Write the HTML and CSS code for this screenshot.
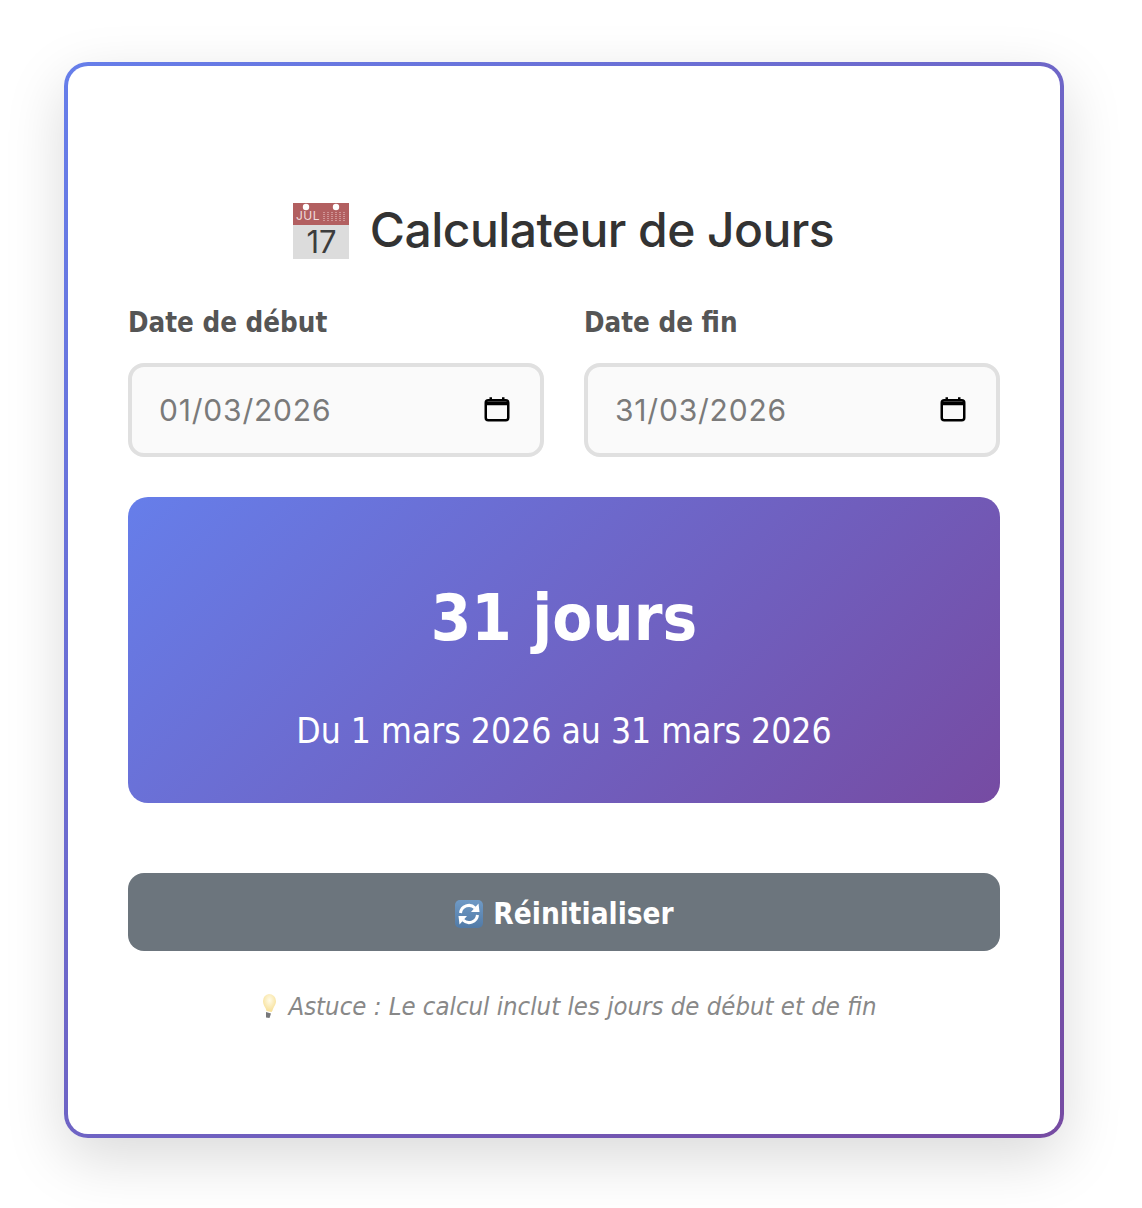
FILE: index.html
```html
<!DOCTYPE html>
<html>
<head>
    <title>Calculateur de Jours</title>
    <link rel="stylesheet" href="styles.css">
</head>
<body>
    <div class="container">
        <h1 class="title">
            <svg class="title-icon" viewBox="0 0 60 58" width="60" height="58">
                <defs>
                    <linearGradient id="tile" x1="0" y1="0" x2="0" y2="1">
                        <stop offset="0" stop-color="#6f9ac6"/>
                        <stop offset="1" stop-color="#517aa6"/>
                    </linearGradient>
                    <radialGradient id="bulb" cx="0.5" cy="0.35" r="0.7">
                        <stop offset="0" stop-color="#fffbe8"/>
                        <stop offset="1" stop-color="#f6dc8c"/>
                    </radialGradient>
                </defs>
                <rect x="1" y="1" width="56" height="56" fill="#dcdcdc"/>
                <rect x="1" y="1" width="56" height="22" fill="#b25f60"/>
                <circle cx="14" cy="5" r="3.200" fill="#fff"/>
                <circle cx="44" cy="5" r="3.200" fill="#fff"/>
                <text x="4" y="17.500" class="icon-month">JUL</text>
                <path d="M32 10v10M36 10v10M40 10v10M44 10v10M48 10v10M52 10v10" stroke="#cf9596" stroke-width="2" stroke-dasharray="1 1"/>
                <text x="29.500" y="51" class="icon-day">17</text>
            </svg>
            <span>Calculateur de Jours</span>
        </h1>

        <div class="dates">
            <div class="field">
                <label class="field-label">Date de début</label>
                <div class="date-input">
                    <span>01/03/2026</span>
                    <svg class="picker" viewBox="0 0 24 24" width="30" height="30">
                        <path d="M5 5h14a2 2 0 0 1 2 2v12a2 2 0 0 1-2 2H5a2 2 0 0 1-2-2V7a2 2 0 0 1 2-2z" fill="none" stroke="#000" stroke-width="2"/>
                        <path d="M3 6h18v3H3zM6 2.500h2v3H6zM16 2.500h2v3h-2z" fill="#000"/>
                    </svg>
                </div>
            </div>
            <div class="field">
                <label class="field-label">Date de fin</label>
                <div class="date-input">
                    <span>31/03/2026</span>
                    <svg class="picker" viewBox="0 0 24 24" width="30" height="30">
                        <path d="M5 5h14a2 2 0 0 1 2 2v12a2 2 0 0 1-2 2H5a2 2 0 0 1-2-2V7a2 2 0 0 1 2-2z" fill="none" stroke="#000" stroke-width="2"/>
                        <path d="M3 6h18v3H3zM6 2.500h2v3H6zM16 2.500h2v3h-2z" fill="#000"/>
                    </svg>
                </div>
            </div>
        </div>

        <div class="result">
            <div class="result-days">31 jours</div>
            <div class="result-range">Du 1 mars 2026 au 31 mars 2026</div>
        </div>

        <button class="reset">
            <svg class="reset-icon" viewBox="0 0 30 30" width="30" height="30">
                <rect x="1" y="1" width="28" height="28" rx="5" fill="url(#tile)"/>
                <path d="M6.500 14a8.500 8.500 0 0 1 14.500-5" fill="none" stroke="#fff" stroke-width="3"/>
                <path d="M23.500 16a8.500 8.500 0 0 1-14.500 5" fill="none" stroke="#fff" stroke-width="3"/>
                <path d="M17 13l8.500 0-1-8.500zM13 17l-8.500 0 1 8.500z" fill="#fff"/>
            </svg>
            <span>Réinitialiser</span>
        </button>

        <p class="tip">
            <svg class="tip-icon" viewBox="0 0 20 26" width="20" height="26">
                <path d="M11 1a7 7 0 0 1 7 7c0 4-2.500 5.500-3.500 9.500l-1 1.500-5-1c-0.500-3.500-3.500-5.500-3.500-10A7 7 0 0 1 11 1z" fill="url(#bulb)"/>
                <path d="M8 19l5 1.500-1.500 4.500-3.500-0.500z" fill="#77787a"/>
            </svg>
            <span>Astuce : Le calcul inclut les jours de début et de fin</span>
        </p>
    </div>
</body>
</html>
```

FILE: styles.css
```css
* {
    box-sizing: border-box;
}

body {
    margin: 0;
    padding: 62px 0 70px 64px;
    background-color: #fff;
    font-family: "DejaVu Sans", sans-serif;
    font-stretch: condensed;
}

.container {
    width: 1000px;
    height: 1076px;
    padding: 132px 60px 0;
    border: 4px solid transparent;
    border-radius: 24px;
    background: linear-gradient(#fff, #fff) padding-box, linear-gradient(135deg, #667eea, #764ba2) border-box;
    box-shadow: 0 20px 60px rgba(0, 0, 0, 0.15);
}

.title {
    display: flex;
    justify-content: center;
    align-items: center;
    gap: 18px;
    height: 62px;
    margin: 0 0 46px;
    padding-right: 2px;
    font-family: "Inter", sans-serif;
    font-size: 48px;
    font-weight: 500;
    font-stretch: normal;
    letter-spacing: -0.55px;
    color: #333;
}

.title-icon {
    margin-top: 4px;
    overflow: visible;
}

.icon-month {
    font-family: "Inter", sans-serif;
    font-size: 12px;
    font-weight: 400;
    letter-spacing: 0.5px;
    fill: #f0dcdc;
}

.icon-day {
    font-family: "Inter", sans-serif;
    font-size: 31px;
    font-weight: 400;
    letter-spacing: 0;
    text-anchor: middle;
    fill: #3c3c3c;
}

.dates {
    display: grid;
    grid-template-columns: 1fr 1fr;
    gap: 40px;
}

.field-label {
    display: block;
    height: 32px;
    margin-bottom: 25px;
    font-size: 27.5px;
    font-weight: 700;
    line-height: 32px;
    color: #555;
}

.date-input {
    display: flex;
    justify-content: space-between;
    align-items: center;
    height: 94px;
    padding: 0 28px 0 27px;
    border: 4px solid #e0e0e0;
    border-radius: 16px;
    background-color: #fafafa;
    font-family: "Inter", sans-serif;
    font-size: 30px;
    font-stretch: normal;
    letter-spacing: 0.8px;
    color: #7a7a7a;
}

.picker {
    margin-bottom: 2px;
}

.result {
    height: 306px;
    margin-top: 40px;
    padding-top: 79px;
    border-radius: 20px;
    background: linear-gradient(135deg, #667eea, #764ba2);
    color: #fff;
    text-align: center;
}

.result-days {
    font-size: 64.8px;
    font-weight: 700;
    line-height: 84px;
}

.result-range {
    margin-top: 48px;
    font-size: 35.2px;
    line-height: 46px;
}

.reset {
    display: flex;
    justify-content: center;
    align-items: center;
    gap: 9px;
    width: 100%;
    height: 78px;
    margin-top: 70px;
    padding-top: 4px;
    border: none;
    border-radius: 16px;
    background-color: #6c757d;
    font-family: inherit;
    font-size: 29.5px;
    font-weight: 700;
    font-stretch: condensed;
    color: #fff;
    cursor: pointer;
}

.tip {
    display: flex;
    justify-content: center;
    align-items: center;
    gap: 10px;
    margin: 38px 0 0;
    padding-left: 7px;
    font-size: 25.5px;
    font-style: italic;
    line-height: 34px;
    color: #888;
}
```
